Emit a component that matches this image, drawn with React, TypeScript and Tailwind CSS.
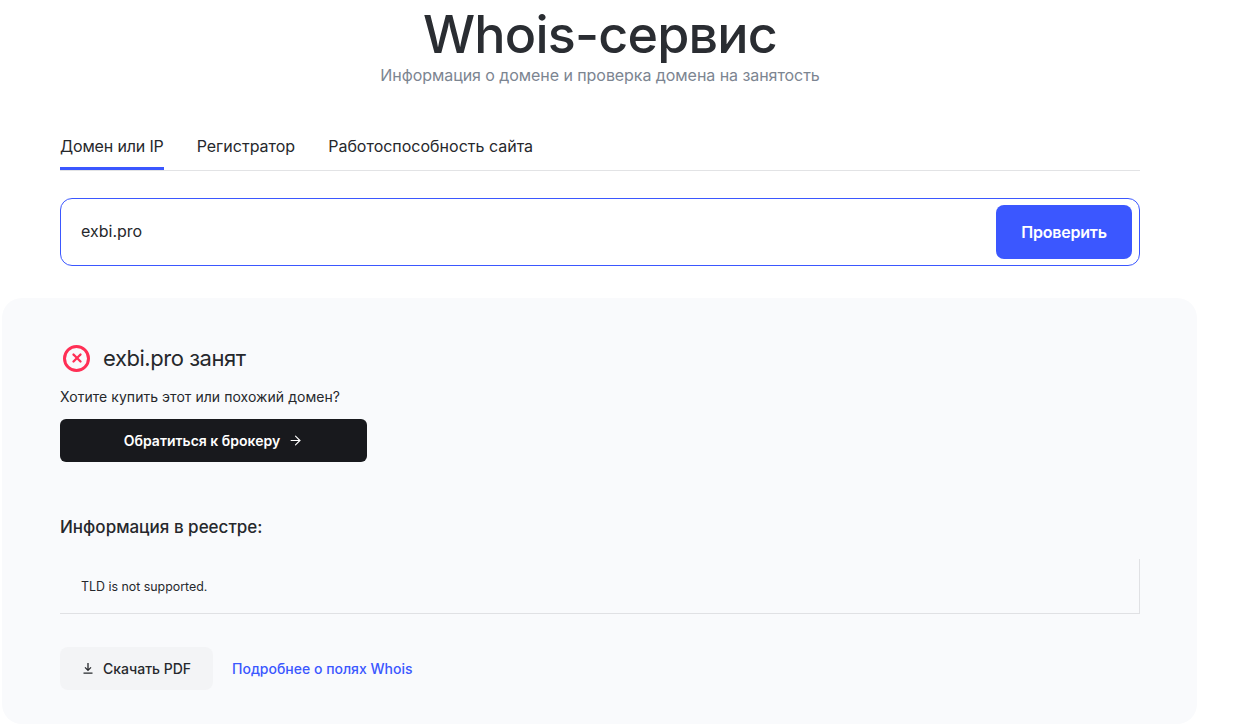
import { ArrowRight, X } from 'lucide-react'

const tabs = ['Домен или IP', 'Регистратор', 'Работоспособность сайта']

export default function App() {
  return (
    <div className="h-[724px] overflow-hidden bg-white font-['Inter',sans-serif] text-[#26282c]">
      <div className="ml-[60px] w-[1080px]">
        <h1 className="pt-[5px] text-center text-[52px] leading-[60px] font-medium tracking-[-0.8px] text-[#2a2d32]">
          Whois-сервис
        </h1>
        <p className="-mt-px text-center text-[16px] leading-[22px] tracking-[-0.06px] text-[#7c8591]">
          Информация о домене и проверка домена на занятость
        </p>

        <div className="mt-[38px] flex gap-[33px] border-b border-[#e2e3e5]">
          {tabs.map((tab, i) => (
            <div
              key={tab}
              className={
                i === 0
                  ? 'h-[46px] border-b-[3px] border-[#3b57ff] pt-[11px] text-[16px] leading-[22px] tracking-[-0.15px] -mb-px'
                  : 'h-[46px] pt-[11px] text-[16px] leading-[22px]'
              }
            >
              {tab}
            </div>
          ))}
        </div>

        <div className="mt-[27px] flex h-[68px] items-center justify-between rounded-[12px] border border-[#3b57ff] pr-[7px] pl-[20px]">
          <span className="pb-[2px] text-[16px]">exbi.pro</span>
          <button className="h-[54px] w-[136px] rounded-[8px] bg-[#3b57ff] text-[16px] font-semibold tracking-[-0.2px] text-white">
            Проверить
          </button>
        </div>
      </div>

      <div className="mt-[32px] ml-[2px] h-[426px] w-[1195px] rounded-[20px] bg-[#f9fafc] pt-[44px] pr-[57px] pl-[58px]">
        <div className="flex items-center gap-[13px]">
          <span className="ml-[3px] flex h-[27px] w-[27px] items-center justify-center rounded-full border-[3px] border-[#ff2f55]">
            <X className="h-[14px] w-[14px] text-[#ff2f55]" strokeWidth={4} />
          </span>
          <h2 className="text-[22px] leading-[32px] tracking-[-0.45px]">exbi.pro занят</h2>
        </div>

        <p className="mt-[13px] text-[14px] leading-[20px] tracking-[0.05px]">Хотите купить этот или похожий домен?</p>

        <button className="mt-[12px] flex h-[43px] w-[307px] items-center justify-center gap-[8px] rounded-[6px] bg-[#18191d] text-[14px] font-semibold text-white">
          Обратиться к брокеру
          <ArrowRight className="h-[15px] w-[15px]" strokeWidth={1.75} />
        </button>

        <h3 className="mt-[52px] text-[17px] leading-[26px] font-medium">Информация в реестре:</h3>

        <div className="mt-[19px] h-[55px] border-r border-b border-[#e0e1e4] pt-[19px] pl-[21px] text-[12.4px] leading-[18px]">
          TLD is not supported.
        </div>

        <div className="mt-[33px] flex items-center gap-[19px]">
          <button className="flex h-[43px] w-[153px] items-center gap-[10px] rounded-[8px] bg-[#f3f4f6] pl-[23px] text-[14px] font-medium">
            <svg viewBox="0 0 10 11" className="h-[11px] w-[10px]" fill="none" stroke="currentColor" strokeWidth="1.3">
              <path d="M5 0v7M2 4.4 5 7.4l3-3M0.5 10.2h9" />
            </svg>
            Скачать PDF
          </button>
          <a className="text-[14px] font-medium text-[#3b57ff]">Подробнее о полях Whois</a>
        </div>
      </div>
    </div>
  )
}
